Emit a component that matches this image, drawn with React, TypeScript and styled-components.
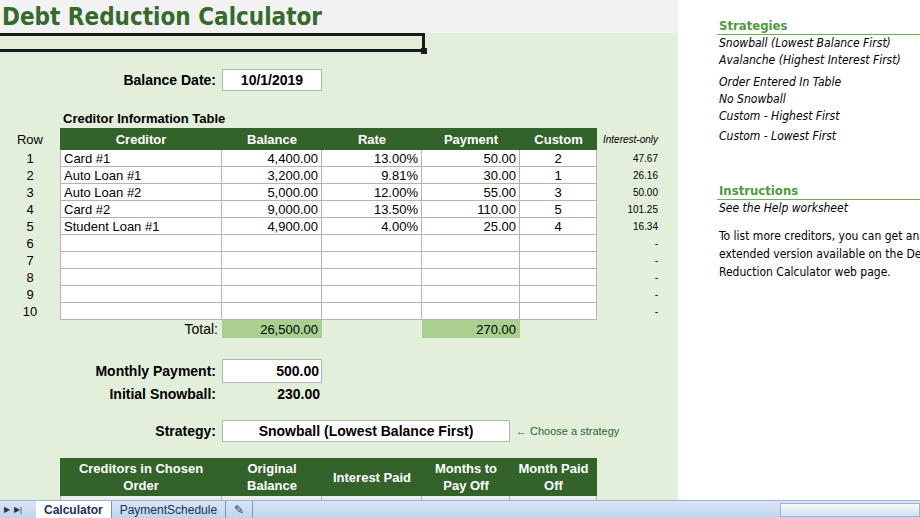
import React from "react";
import styled, { createGlobalStyle } from "styled-components";

const G = createGlobalStyle`
  html,body{margin:0;padding:0;width:920px;height:518px;overflow:hidden;background:#fff;}
  *{box-sizing:border-box;}
`;
const Page = styled.div`width:920px;height:518px;display:flex;flex-direction:column;font-family:"Liberation Sans",Arial,sans-serif;font-size:13px;color:#000;`;
const Body = styled.div`flex:1;display:flex;overflow:hidden;`;
const Sheet = styled.div`width:678px;display:flex;flex-direction:column;background:#e2efda;overflow:hidden;`;
const TitleBar = styled.div`height:33px;flex-shrink:0;background:#f2f2f2;padding-left:2px;display:flex;align-items:center;
  font-family:Tahoma,"DejaVu Sans Condensed","DejaVu Sans",sans-serif;font-weight:bold;font-size:24px;color:#37692e;`;
const Sel = styled.div`width:425px;height:19px;flex-shrink:0;border:3px solid #1a1a1a;border-left:none;position:relative;
  &::after{content:"";position:absolute;right:-5px;bottom:-5px;width:6px;height:6px;background:#1a1a1a;}`;
const Line = styled.div<{h:number;mt?:number}>`height:${p=>p.h}px;flex-shrink:0;margin-top:${p=>p.mt||0}px;display:flex;align-items:center;`;
const Label = styled.div<{w?:number;bold?:boolean}>`width:${p=>p.w||222}px;text-align:right;padding-right:6px;font-size:14px;font-weight:${p=>p.bold?"bold":"normal"};`;
const Box = styled.div<{w:number;align?:string}>`width:${p=>p.w}px;height:100%;background:#fff;border:1px solid #b4b4b4;display:flex;align-items:center;
  justify-content:${p=>p.align||"center"};padding:0 2px;font-weight:bold;font-size:14px;`;
const Plain = styled.div<{w:number}>`width:${p=>p.w}px;text-align:right;padding-right:2px;font-weight:bold;font-size:14px;`;
const Grid = styled.div<{cols:string}>`display:grid;flex-shrink:0;grid-template-columns:${p=>p.cols};`;
const Caption = styled.div`padding-left:63px;font-weight:bold;font-size:13px;height:18px;flex-shrink:0;display:flex;align-items:flex-end;`;
const Hd = styled.div<{h?:number}>`height:${p=>p.h||22}px;background:#33632a;color:#fff;font-weight:bold;font-size:13px;display:flex;align-items:center;justify-content:center;text-align:center;line-height:17px;`;
const RowNum = styled.div<{h?:number}>`height:${p=>p.h||17}px;display:flex;align-items:center;justify-content:center;font-size:13px;`;
const Cell = styled.div<{align?:string;bg?:string}>`height:17px;background:${p=>p.bg||"#fff"};border-right:1px solid #b4b4b4;border-bottom:1px solid #b4b4b4;
  display:flex;align-items:center;justify-content:${p=>p.align||"flex-start"};padding:0 3px;font-size:13px;white-space:nowrap;overflow:hidden;`;
const Io = styled.div<{italic?:boolean}>`height:17px;display:flex;align-items:center;justify-content:flex-end;padding-right:20px;font-size:10px;font-style:${p=>p.italic?"italic":"normal"};`;
const Tot = styled.div<{bg?:string;align?:string}>`height:18px;background:${p=>p.bg||"transparent"};display:flex;align-items:center;justify-content:${p=>p.align||"flex-end"};padding:0 4px;font-size:13px;`;
const Hint = styled.div`font-size:11px;color:#33632a;padding-left:6px;font-family:"Liberation Sans Narrow","Liberation Sans",sans-serif;`;
const Side = styled.div`flex:1;padding:18px 0 0 41px;font-family:Tahoma,"DejaVu Sans Condensed",sans-serif;font-size:12px;white-space:nowrap;overflow:hidden;`;
const SideHd = styled.div<{mt?:number}>`color:#4e9a3e;font-weight:bold;font-size:13px;border-bottom:1px solid #70ad47;margin-top:${p=>p.mt||0}px;margin-left:-2px;padding-left:2px;height:17px;`;
const It = styled.div<{mt?:number}>`font-style:italic;height:17px;line-height:17px;margin-top:${p=>p.mt||0}px;`;
const Txt = styled.div`height:18px;line-height:18px;`;
const Tabs = styled.div`height:18px;background:linear-gradient(#d9e5f5,#c1d3ec);border-top:1px solid #9db5d8;display:flex;align-items:flex-end;font-size:12px;`;
const Nav = styled.div`width:36px;font-size:8px;color:#334;display:flex;gap:4px;padding-left:4px;align-self:center;`;
const Tab = styled.div<{active?:boolean}>`padding:0 8px;height:17px;display:flex;align-items:center;background:${p=>p.active?"#fff":"transparent"};
  color:#1c2f5a;font-weight:${p=>p.active?"bold":"normal"};border-right:1px solid #7a93ba;font-size:12px;`;
const Scroll = styled.div`margin-left:auto;width:140px;height:14px;align-self:center;background:linear-gradient(#f4f7fb,#d6e1f0);border:1px solid #9db5d8;`;

const rows = [
  ["Card #1","4,400.00","13.00%","50.00","2","47.67"],
  ["Auto Loan #1","3,200.00","9.81%","30.00","1","26.16"],
  ["Auto Loan #2","5,000.00","12.00%","55.00","3","50.00"],
  ["Card #2","9,000.00","13.50%","110.00","5","101.25"],
  ["Student Loan #1","4,900.00","4.00%","25.00","4","16.34"],
];
const COLS = "60px 162px 100px 100px 98px 77px 81px";

export default function App(){
  const all = [...rows, ...Array(5).fill(["","","","","","-"])];
  return (<Page><G/>
    <Body>
      <Sheet>
        <TitleBar>Debt Reduction Calculator</TitleBar>
        <Sel/>
        <Line h={22} mt={17}><Label bold>Balance Date:</Label><Box w={100}>10/1/2019</Box></Line>
        <Caption style={{marginTop:17}}>Creditor Information Table</Caption>
        <Grid cols={COLS} style={{marginTop:2}}>
          <RowNum h={22}>Row</RowNum>
          {["Creditor","Balance","Rate","Payment","Custom"].map(h=><Hd key={h}>{h}</Hd>)}
          <Io italic style={{height:22}}>Interest-only</Io>
          {all.map((r,i)=>(<React.Fragment key={i}>
            <RowNum>{i+1}</RowNum>
            <Cell style={{borderLeft:"1px solid #b4b4b4"}}>{r[0]}</Cell>
            <Cell align="flex-end">{r[1]}</Cell>
            <Cell align="flex-end">{r[2]}</Cell>
            <Cell align="flex-end">{r[3]}</Cell>
            <Cell align="center">{r[4]}</Cell>
            <Io>{r[5]}</Io>
          </React.Fragment>))}
          <div/><Tot style={{fontSize:14}}>Total:</Tot><Tot bg="#a9d08e">26,500.00</Tot><div/><Tot bg="#a9d08e">270.00</Tot><div/><div/>
        </Grid>
        <Line h={24} mt={21}><Label bold>Monthly Payment:</Label><Box w={100} align="flex-end">500.00</Box></Line>
        <Line h={22}><Label bold>Initial Snowball:</Label><Plain w={100}>230.00</Plain></Line>
        <Line h={22} mt={15}><Label bold>Strategy:</Label><Box w={288}>Snowball (Lowest Balance First)</Box><Hint>← Choose a strategy</Hint></Line>
        <Grid cols="60px 162px 100px 100px 88px 87px" style={{marginTop:16}}>
          <div/>
          <Hd h={38}>Creditors in Chosen<br/>Order</Hd><Hd h={38}>Original<br/>Balance</Hd><Hd h={38}>Interest Paid</Hd><Hd h={38}>Months to<br/>Pay Off</Hd><Hd h={38}>Month Paid<br/>Off</Hd>
          <div/>
          <Cell bg="#ececec" style={{borderLeft:"1px solid #b4b4b4"}}>Auto Loan #1</Cell><Cell bg="#ececec" align="flex-end">3,200.00</Cell><Cell bg="#ececec" align="flex-end">106.45</Cell><Cell bg="#ececec" align="center">11</Cell><Cell bg="#ececec" align="center">Dec-2020</Cell>
        </Grid>
      </Sheet>
      <Side>
        <SideHd>Strategies</SideHd>
        <It>Snowball (Lowest Balance First)</It>
        <It>Avalanche (Highest Interest First)</It>
        <It mt={5}>Order Entered In Table</It>
        <It>No Snowball</It>
        <It>Custom - Highest First</It>
        <It mt={3}>Custom - Lowest First</It>
        <SideHd mt={38}>Instructions</SideHd>
        <It>See the Help worksheet</It>
        <Txt style={{marginTop:10}}>To list more creditors, you can get an</Txt>
        <Txt>extended version available on the Debt</Txt>
        <Txt>Reduction Calculator web page.</Txt>
      </Side>
    </Body>
    <Tabs>
      <Nav><span>▶</span><span>▶|</span></Nav>
      <Tab active>Calculator</Tab><Tab>PaymentSchedule</Tab><Tab>✎</Tab>
      <Scroll/>
    </Tabs>
  </Page>);
}
